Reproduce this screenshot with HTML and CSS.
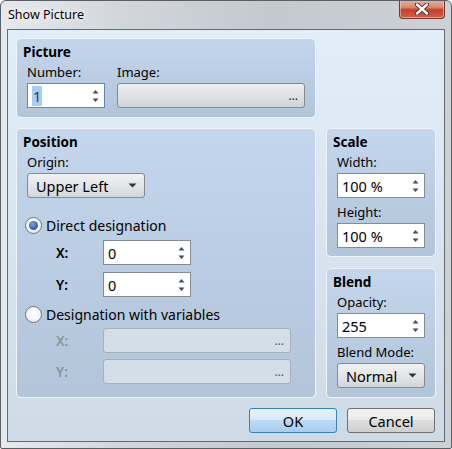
FILE: index.html
```html
<!DOCTYPE html>
<html>
<head>
<meta charset="utf-8">
<link rel="stylesheet" href="styles.css">
</head>
<body>
<div class="window">
  <div class="titlebar">
    <span class="title">Show Picture</span>
    <div class="close">
      <svg width="16" height="12" viewBox="0 0 16 12">
        <path d="M3 1.5 L13 10.5 M13 1.5 L3 10.5" stroke="#4a2a22" stroke-width="4.2" stroke-linecap="round" fill="none"/>
        <path d="M3 1.5 L13 10.5 M13 1.5 L3 10.5" stroke="#ffffff" stroke-width="2.4" stroke-linecap="round" fill="none"/>
      </svg>
    </div>
  </div>
  <div class="client">
    <div class="group picture">
      <div class="gtitle">Picture</div>
      <div class="prow">
        <div class="field">
          <div class="label">Number:</div>
          <div class="spin focus w78"><span class="val"><span class="sel">1</span></span><span class="arrows"><svg width="7" height="14" viewBox="0 0 7 14"><path d="M3.5 1 L6.5 4.5 L0.5 4.5 Z M3.5 13 L6.5 9.5 L0.5 9.5 Z" fill="#4d4d4d"/></svg></span></div>
        </div>
        <div class="field">
          <div class="label">Image:</div>
          <div class="browse w188"><span class="dots">…</span></div>
        </div>
      </div>
    </div>

    <div class="main">
      <div class="group position">
        <div class="gtitle">Position</div>
        <div class="label ind">Origin:</div>
        <div class="combo ind w118"><span class="ctext">Upper Left</span><svg width="9" height="5" viewBox="0 0 9 5"><path d="M0.5 0.5 L8.5 0.5 L4.5 4.5 Z" fill="#333"/></svg></div>
        <div class="radio-row r1"><span class="radio on"><span class="dot"></span></span><span class="rlabel">Direct designation</span></div>
        <div class="xy-row first">
          <span class="xy">X:</span>
          <div class="spin w88"><span class="val">0</span><span class="arrows"><svg width="7" height="14" viewBox="0 0 7 14"><path d="M3.5 1 L6.5 4.5 L0.5 4.5 Z M3.5 13 L6.5 9.5 L0.5 9.5 Z" fill="#4d4d4d"/></svg></span></div>
        </div>
        <div class="xy-row">
          <span class="xy">Y:</span>
          <div class="spin w88"><span class="val">0</span><span class="arrows"><svg width="7" height="14" viewBox="0 0 7 14"><path d="M3.5 1 L6.5 4.5 L0.5 4.5 Z M3.5 13 L6.5 9.5 L0.5 9.5 Z" fill="#4d4d4d"/></svg></span></div>
        </div>
        <div class="radio-row r2"><span class="radio"></span><span class="rlabel">Designation with variables</span></div>
        <div class="xy-row dis first2">
          <span class="xy">X:</span>
          <div class="browse disabled w188"><span class="dots">…</span></div>
        </div>
        <div class="xy-row dis">
          <span class="xy">Y:</span>
          <div class="browse disabled w188"><span class="dots">…</span></div>
        </div>
      </div>

      <div class="side">
        <div class="group scale">
          <div class="gtitle">Scale</div>
          <div class="label ind">Width:</div>
          <div class="spin ind w88"><span class="val">100 %</span><span class="arrows"><svg width="7" height="14" viewBox="0 0 7 14"><path d="M3.5 1 L6.5 4.5 L0.5 4.5 Z M3.5 13 L6.5 9.5 L0.5 9.5 Z" fill="#4d4d4d"/></svg></span></div>
          <div class="label ind second">Height:</div>
          <div class="spin ind w88"><span class="val">100 %</span><span class="arrows"><svg width="7" height="14" viewBox="0 0 7 14"><path d="M3.5 1 L6.5 4.5 L0.5 4.5 Z M3.5 13 L6.5 9.5 L0.5 9.5 Z" fill="#4d4d4d"/></svg></span></div>
        </div>
        <div class="group blend">
          <div class="gtitle">Blend</div>
          <div class="label ind">Opacity:</div>
          <div class="spin ind w88"><span class="val">255</span><span class="arrows"><svg width="7" height="14" viewBox="0 0 7 14"><path d="M3.5 1 L6.5 4.5 L0.5 4.5 Z M3.5 13 L6.5 9.5 L0.5 9.5 Z" fill="#4d4d4d"/></svg></span></div>
          <div class="label ind second">Blend Mode:</div>
          <div class="combo ind w88"><span class="ctext">Normal</span><svg width="9" height="5" viewBox="0 0 9 5"><path d="M0.5 0.5 L8.5 0.5 L4.5 4.5 Z" fill="#333"/></svg></div>
        </div>
      </div>
    </div>

    <div class="actions">
      <div class="btn default">OK</div>
      <div class="btn">Cancel</div>
    </div>
  </div>
</div>
</body>
</html>
```

FILE: styles.css
```css
* { box-sizing: border-box; }
html, body { margin: 0; padding: 0; background: #ffffff; }
body {
  font-family: "Noto Sans", "Open Sans", sans-serif;
  font-size: 13px;
  color: #000;
}
.window {
  width: 452px;
  height: 449px;
  border: 1px solid #5a5f66;
  border-radius: 6px 6px 2px 2px;
  background: linear-gradient(90deg, #e6e9ec 0%, #d3d7dc 25%, #c4c9cf 60%, #cdd1d6 100%);
  display: flex;
  flex-direction: column;
  overflow: hidden;
}
.titlebar {
  height: 28px;
  flex: none;
  display: flex;
  align-items: flex-start;
  justify-content: space-between;
  padding-left: 7px;
  padding-right: 6px;
}
.title {
  font-size: 12.5px;
  line-height: 12px;
  margin-top: 8px;
  color: #000;
  text-shadow: 0 0 8px #fff, 0 0 4px #fff;
}
.close {
  width: 46px;
  height: 19px;
  margin-top: -1px;
  border: 1px solid #6b3a30;
  border-top: none;
  border-radius: 0 0 4px 4px;
  background: linear-gradient(180deg, #e8b3a3 0%, #d88a74 40%, #c2402a 55%, #d0614a 100%);
  box-shadow: inset 0 0 0 1px rgba(255,220,210,0.5);
  display: flex;
  align-items: center;
  justify-content: center;
}
.client {
  margin-left: 6px;
  width: 438px;
  height: 413px;
  border: 1px solid #646a72;
  background: linear-gradient(180deg, #e2edfa 0%, #dbe6f2 40%, #cedae5 100%);
  padding: 8px 0 0 8px;
  display: flex;
  flex-direction: column;
}
.group {
  border: 1px solid #eef4fa;
  border-radius: 5px;
  background: linear-gradient(180deg, #c4d6ec 0%, #b9cbe0 60%, #b3c5d9 100%);
  padding: 4px 6px 0 6px;
}
.gtitle {
  font-weight: bold;
  font-size: 13.5px;
  line-height: 18px;
  height: 18px;
}
.label {
  line-height: 16px;
  height: 16px;
}
.ind { margin-left: 4px; }
.picture {
  width: 300px;
  height: 80px;
}
.prow {
  display: flex;
  gap: 12px;
  margin-left: 4px;
  margin-top: 3px;
}
.field .label { margin-bottom: 3px; }
.w78 { width: 78px; }
.w88 { width: 88px; }
.w118 { width: 118px; }
.w188 { width: 188px; }
.spin {
  height: 25px;
  background: #fff;
  border: 1px solid #858b93;
  display: flex;
  align-items: center;
  justify-content: space-between;
  padding: 0 5px 0 4px;
  font-size: 14.5px;
}
.spin.focus { border-color: #5f88b4; }
.val { line-height: 18px; }
.sel { background: #a9cdef; color: #123d6e; padding: 0 1px; }
.arrows { display: flex; align-items: center; }
.browse {
  height: 25px;
  border: 1px solid #858a90;
  border-radius: 3px;
  background: linear-gradient(180deg, #eceef0 0%, #dfe2e5 50%, #cfd3d7 100%);
  display: flex;
  align-items: center;
  justify-content: flex-end;
  padding-right: 6px;
}
.dots { font-size: 12px; color: #222; }
.browse.disabled {
  background: #d3dee8;
  border-color: #a9b0b7;
}
.browse.disabled .dots { color: #555; }
.main {
  display: flex;
  gap: 10px;
  margin-top: 10px;
}
.position {
  width: 300px;
  height: 270px;
}
.position .label { margin-top: 3px; margin-bottom: 3px; }
.combo {
  height: 25px;
  border: 1px solid #858a90;
  border-radius: 3px;
  background: linear-gradient(180deg, #f0f1f2 0%, #e3e5e7 50%, #d3d6d9 100%);
  display: flex;
  align-items: center;
  justify-content: space-between;
  padding: 0 7px 0 8px;
  font-size: 14.5px;
}
.radio-row {
  display: flex;
  align-items: center;
  margin-left: 2px;
  height: 20px;
}
.r1 { margin-top: 17px; }
.r2 { margin-top: 7px; }
.radio {
  width: 17px;
  height: 17px;
  border-radius: 50%;
  border: 1px solid #70757c;
  background: radial-gradient(circle at 50% 40%, #ffffff 0%, #f1f3f5 60%, #dcdfe3 100%);
  display: flex;
  align-items: center;
  justify-content: center;
  flex: none;
}
.dot {
  width: 9px;
  height: 9px;
  border-radius: 50%;
  background: radial-gradient(circle at 40% 35%, #7d9ee0 0%, #3c62b8 60%, #2c4f9c 100%);
}
.rlabel { margin-left: 4px; font-size: 14px; }
.xy-row {
  display: flex;
  align-items: center;
  margin-top: 7px;
}
.xy-row.first { margin-top: 5px; }
.xy-row.dis { margin-top: 6px; }
.xy-row.dis.first2 { margin-top: 4px; }
.xy {
  width: 47px;
  margin-left: 33px;
  flex: none;
  font-size: 13.5px;
  font-weight: 600;
}
.xy-row.dis .xy { color: #8b949d; }
.side {
  display: flex;
  flex-direction: column;
  gap: 11px;
}
.scale {
  width: 110px;
  height: 129px;
}
.blend {
  width: 110px;
  height: 130px;
}
.scale .label, .blend .label { margin-top: 3px; margin-bottom: 3px; }
.scale .label.second, .blend .label.second { margin-top: 6px; }
.actions {
  display: flex;
  justify-content: flex-end;
  gap: 10px;
  margin-top: 10px;
  padding-right: 9px;
}
.btn {
  width: 88px;
  height: 25px;
  border: 1px solid #707070;
  border-radius: 3px;
  background: linear-gradient(180deg, #f2f2f2 0%, #ebebeb 45%, #dddddd 50%, #cfcfcf 100%);
  display: flex;
  align-items: center;
  justify-content: center;
  font-size: 14.5px;
}
.btn.default {
  border-color: #3c7fb1;
  background: linear-gradient(180deg, #e5f1fb 0%, #d9ebf9 45%, #bedcf5 50%, #a7cdef 100%);
}
```
